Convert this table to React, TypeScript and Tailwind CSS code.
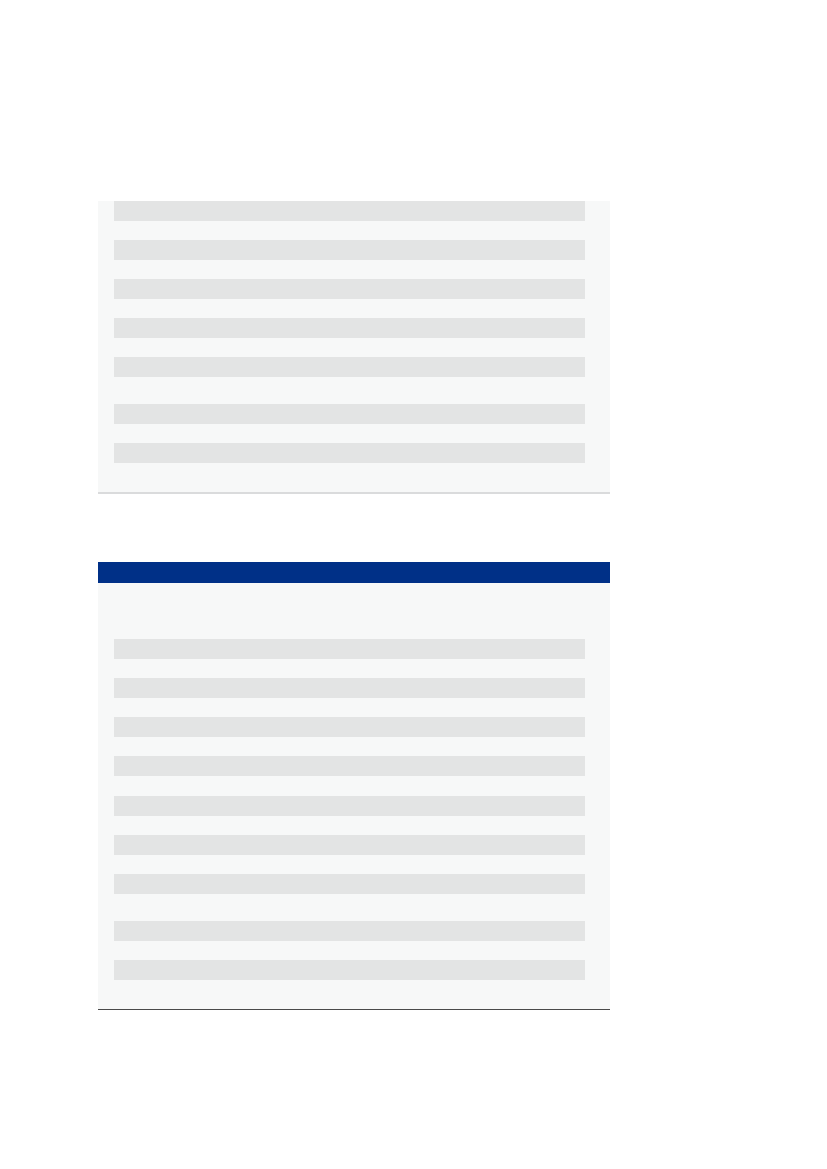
const Bar = () => <div className="ml-4 h-5 w-[471px] bg-[#e3e4e4]" />;

const BarGroup = ({ count }: { count: number }) => (
  <div className="flex flex-col gap-[19px]">
    {Array.from({ length: count }).map((_, i) => (
      <Bar key={i} />
    ))}
  </div>
);

export default function App() {
  return (
    <div className="min-h-[1169px] w-[827px] bg-white pl-[98px] pt-[201px] font-['Liberation_Sans',sans-serif]">
      {/* first panel */}
      <div className="w-[512px] border-b-2 border-[#dadbdc] bg-[#f7f8f8] pb-[29px]">
        <BarGroup count={5} />
        <div className="mt-[27px]">
          <BarGroup count={2} />
        </div>
      </div>

      {/* second panel */}
      <div className="mt-[68px] w-[512px] border-b border-[#4a4a4a] bg-[#f7f8f8] pb-[29px]">
        <div className="h-[21px] bg-[#003087]" />
        <div className="mt-[56px]">
          <BarGroup count={4} />
        </div>
        <div className="mt-5">
          <BarGroup count={3} />
        </div>
        <div className="mt-[27px]">
          <BarGroup count={2} />
        </div>
      </div>
    </div>
  );
}
